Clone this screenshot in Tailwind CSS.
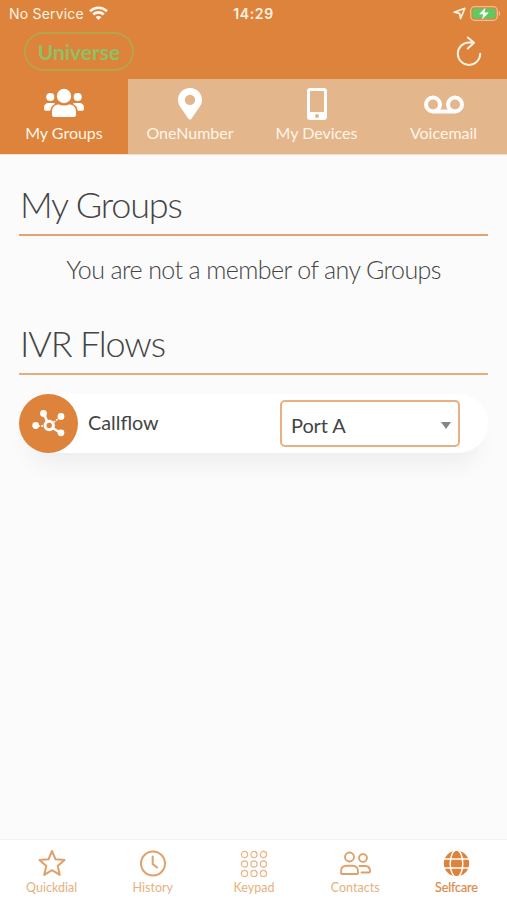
<!DOCTYPE html>
<html lang="en">
<head>
<meta charset="utf-8">
<title>Selfcare</title>
<script src="https://cdn.jsdelivr.net/npm/@tailwindcss/browser@4"></script>
</head>
<body class="w-[507px] h-[900px] overflow-hidden bg-[#fbfbfb] font-['Lato',sans-serif] flex flex-col text-[#444]">
<header class="bg-[#dd833b] h-[79px] shrink-0 flex flex-col text-[#fff3e4]">
  <div class="h-[28px] grid grid-cols-3 items-center font-['Inter',sans-serif] text-[14px] leading-[28px]">
    <div class="flex items-center gap-[5px] pl-[9px]">
      <span class="tracking-[0.2px] whitespace-nowrap">No Service</span>
      <svg class="w-[19px] h-[14px] -mt-[2px]" viewBox="0 0 19 14" fill="none" stroke="#fff8ee" stroke-width="2.6"><path d="M1 5.2C5.8.6 13.200.6 18 5.200M4.200 8.500c3-2.800 7.600-2.800 10.600 0"/><path d="M9.500 14 6.600 11.100c1.600-1.500 4.200-1.500 5.800 0z" fill="#fff8ee" stroke="none"/></svg>
    </div>
    <div class="text-center font-semibold tracking-[0.6px]">14:29</div>
    <div class="flex items-center justify-end gap-[4px] pr-[6px] -mt-[2px]">
      <svg class="w-[13px] h-[13px]" viewBox="0 0 13 13" fill="none" stroke="#fff3e4" stroke-width="1.700" stroke-linejoin="round"><path d="M1.200 5.200 11.800 1.300 7.600 11.500 6.500 6.300z"/></svg>
      <svg class="w-[31px] h-[15px]" viewBox="0 0 31 15"><rect x=".7" y=".7" width="26.600" height="13.600" rx="4" fill="none" stroke="#f0bd92" stroke-width="1.300"/><rect x="2.500" y="2.500" width="23" height="10" rx="2" fill="#5fca62"/><path d="M28.700 5v5c2-.8 2-4.200 0-5z" fill="#f0bd92"/><path d="M15.500 1.500 9 8.300h4.200L12 13.500l6.800-7h-4.300z" fill="#fff"/></svg>
    </div>
  </div>
  <div class="h-[51px] flex justify-between items-start pl-[24px] pr-[24px]">
    <div class="mt-[4px] w-[110px] h-[39px] rounded-full border-2 border-[#b8a24c] text-[#8fc063] font-bold text-[21px] leading-[36px] text-center">Universe</div>
    <svg class="mt-[7px] w-[28px] h-[32px]" viewBox="0 0 28 32" fill="none" stroke="#fff3e4" stroke-width="2" stroke-linecap="round" stroke-linejoin="round"><path d="M25.200 18.700A11.200 11.200 0 1 1 14 7.500h5M12.800 2.500 19 7.700 12.800 13.500"/></svg>
  </div>
</header>
<nav class="h-[76px] shrink-0 grid grid-cols-[128px_125px_127px_127px] border-b border-[#f3dfcc] bg-[#e4b68b] text-[#fff5ea] text-[16px] leading-[20px]">
  <div class="bg-[#dd833b] flex flex-col items-center pt-[9px]">
    <svg class="w-[40px] h-[34px]" viewBox="0 0 40 34" fill="#fff"><circle cx="20" cy="8" r="7.200"/><circle cx="6.300" cy="9" r="4.100"/><circle cx="33.700" cy="9" r="4.100"/><path d="M8 27v-3.500c0-4.300 3-7 7-7 3 1.200 7 1.200 10 0 4 0 7 2.700 7 7V27c0 1.300-1 2-2.200 2H10.200C9 29 8 28.300 8 27zM0 21v-1.500c0-3 2-4.600 4.500-4.600h4c1.200 0 2 .3 2.800.9-2.800 1.500-4.500 3.500-5 6.900H1.600C.6 22.700 0 22 0 21zM40 21v-1.500c0-3-2-4.600-4.500-4.600h-4c-1.200 0-2 .3-2.800.9 2.800 1.500 4.500 3.500 5 6.900h4.700c1 0 1.600-.7 1.600-1.700z"/></svg>
    <span class="mt-px">My Groups</span>
  </div>
  <div class="flex flex-col items-center pt-[8px] pr-px">
    <svg class="w-[26px] h-[34px]" viewBox="0 0 26 34" fill="#fff" fill-rule="evenodd"><path d="M13 1C6.100 1 1 6.300 1 12.700c0 4.600 1.500 6.200 10.700 19.200.7.900 1.900.9 2.600 0C23.500 18.900 25 17.300 25 12.700 25 6.300 19.900 1 13 1zm0 6.700a5.200 5.200 0 1 1 0 10.400 5.200 5.200 0 0 1 0-10.400z"/></svg>
    <span class="mt-[2px]">OneNumber</span>
  </div>
  <div class="flex flex-col items-center pt-[8px]">
    <svg class="w-[22px] h-[34px]" viewBox="0 0 22 34" fill="#fff" fill-rule="evenodd"><path d="M4 1h14c1.800 0 3 1.200 3 3v26c0 1.800-1.200 3-3 3H4c-1.800 0-3-1.200-3-3V4c0-1.800 1.200-3 3-3zm.7 3c-.5 0-.7.300-.7.700v19.600c0 .4.200.7.700.7h12.600c.5 0 .7-.3.700-.7V4.700c0-.4-.2-.7-.7-.7zM11 27a2 2 0 1 0 0 4 2 2 0 0 0 0-4z"/></svg>
    <span class="mt-[2px]">My Devices</span>
  </div>
  <div class="flex flex-col items-center pt-[8px]">
    <svg class="w-[40px] h-[34px]" viewBox="0 0 40 34" fill="none" stroke="#fff" stroke-width="4"><circle cx="9" cy="17.500" r="7"/><circle cx="31" cy="17.500" r="7"/><path d="M9 24.500h22"/></svg>
    <span class="mt-[2px]">Voicemail</span>
  </div>
</nav>
<main class="flex-1 px-[19px] pt-[25px]">
  <h1 class="h-[56px] border-b-2 border-[#e4a36f] pl-[1px] text-[36px] leading-[48px] font-light tracking-[-1.150px] whitespace-nowrap">My Groups</h1>
  <p class="h-[83px] pt-[16px] text-center text-[25px] leading-[34px] font-light tracking-[-0.600px] whitespace-nowrap">You are not a member of any Groups</p>
  <h1 class="h-[56px] border-b-2 border-[#e6ae7c] pl-[1px] text-[36px] leading-[48px] font-light tracking-[-1.150px] whitespace-nowrap">IVR Flows</h1>
  <section class="mt-[19px] h-[59px] rounded-full bg-white flex items-center shadow-[0_20px_24px_-10px_rgba(0,0,0,0.06)]">
    <div class="w-[59px] h-[59px] rounded-full bg-[#dd833b] flex items-center justify-center">
      <svg class="w-[33px] h-[29px]" viewBox="0 0 33 29" fill="#fff" stroke="#fff"><path d="M17 17 12 5M17 17l12 7" stroke-width="2.600"/><path d="M17 17 29 7.500M17 17H3" stroke-width="1.500" stroke-dasharray="2 1"/><g stroke="none"><circle cx="11.500" cy="4.500" r="3.400"/><circle cx="29" cy="7.500" r="3.400"/><circle cx="3.700" cy="16.500" r="3.400"/><circle cx="29" cy="23.800" r="3.400"/></g><circle cx="17.200" cy="16.500" r="4.200" fill="#dd833b" stroke-width="3"/></svg>
    </div>
    <span class="ml-[10px] -mt-[3px] w-[192px] text-[19.800px] leading-[28px]">Callflow</span>
    <div class="w-[180px] h-[47px] rounded-[5px] border-2 border-[#e8b083] flex items-center justify-between pl-[9px] pr-[7px] text-[20px]">
      <span class="pt-[2px] -tracking-[0.1px]">Port A</span>
      <svg class="mt-[3px] w-[10px] h-[7px]" viewBox="0 0 10 7" fill="#858585"><path d="M0 0h10L5 7z"/></svg>
    </div>
  </section>
</main>
<footer class="h-[61px] shrink-0 border-t border-[#f1f1f1] bg-white grid grid-cols-5 pl-px text-[12.500px] leading-[16px] text-[#e6b17e]">
  <div class="flex flex-col items-center pt-[9px]">
    <svg class="w-[28px] h-[28px]" viewBox="0 0 28 28" fill="none" stroke="#dfa06a" stroke-width="2" stroke-linejoin="round"><path d="m14 2 3.500 8.300 9 .8-6.800 5.900 2.100 8.900-7.800-4.700-7.800 4.700L8.300 17 1.500 11.100l9-.8z"/></svg>
    <span class="mt-[3px]">Quickdial</span>
  </div>
  <div class="flex flex-col items-center pt-[9px]">
    <svg class="w-[28px] h-[28px]" viewBox="0 0 28 28" fill="none" stroke="#dfa06a" stroke-width="2" stroke-linecap="round"><circle cx="14" cy="14.500" r="12"/><path d="M13.700 7.500V15l4.300 3.500"/></svg>
    <span class="mt-[3px]">History</span>
  </div>
  <div class="flex flex-col items-center pt-[9px]">
    <svg class="w-[28px] h-[28px]" viewBox="0 0 28 28" fill="none" stroke="#e8b586" stroke-width="1.200"><circle cx="4.500" cy="5.500" r="3.100"/><circle cx="14" cy="5.500" r="3.100"/><circle cx="23.500" cy="5.500" r="3.100"/><circle cx="4.500" cy="15" r="3.100"/><circle cx="14" cy="15" r="3.100"/><circle cx="23.500" cy="15" r="3.100"/><circle cx="4.500" cy="24.500" r="3.100"/><circle cx="14" cy="24.500" r="3.100"/><circle cx="23.500" cy="24.500" r="3.100"/></svg>
    <span class="mt-[3px]">Keypad</span>
  </div>
  <div class="flex flex-col items-center pt-[9px]">
    <svg class="w-[32px] h-[28px]" viewBox="0 0 32 28" fill="none" stroke="#dfa06a" stroke-width="1.900" stroke-linecap="round" stroke-linejoin="round"><circle cx="10.500" cy="8" r="4.500"/><circle cx="24" cy="9" r="3.900"/><path d="M2 24c-.6-5 2-7.300 5.500-7.300h6c3.500 0 6.100 2.300 5.500 7.300 0 .6-.4 1-1 1H3c-.6 0-1-.4-1-1zM20.500 17h6c3.500 0 4.500 2.800 4.500 5.500 0 .6-.4 1-1 1h-7.500"/></svg>
    <span class="mt-[3px]">Contacts</span>
  </div>
  <div class="flex flex-col items-center pt-[9px] text-[#dd8a49]">
    <svg class="w-[28px] h-[28px]" viewBox="0 0 28 28"><circle cx="14.500" cy="14.500" r="12.700" fill="#dd833b"/><path d="M1 10h27M1 19h27" stroke="#fff" stroke-width="1.500"/><ellipse cx="14.500" cy="14.500" rx="6.300" ry="13.500" fill="none" stroke="#fff" stroke-width="1.500"/></svg>
    <span class="mt-[3px] -tracking-[0.100px] [-webkit-text-stroke:0.2px_#dd8a49]">Selfcare</span>
  </div>
</footer>
</body>
</html>
